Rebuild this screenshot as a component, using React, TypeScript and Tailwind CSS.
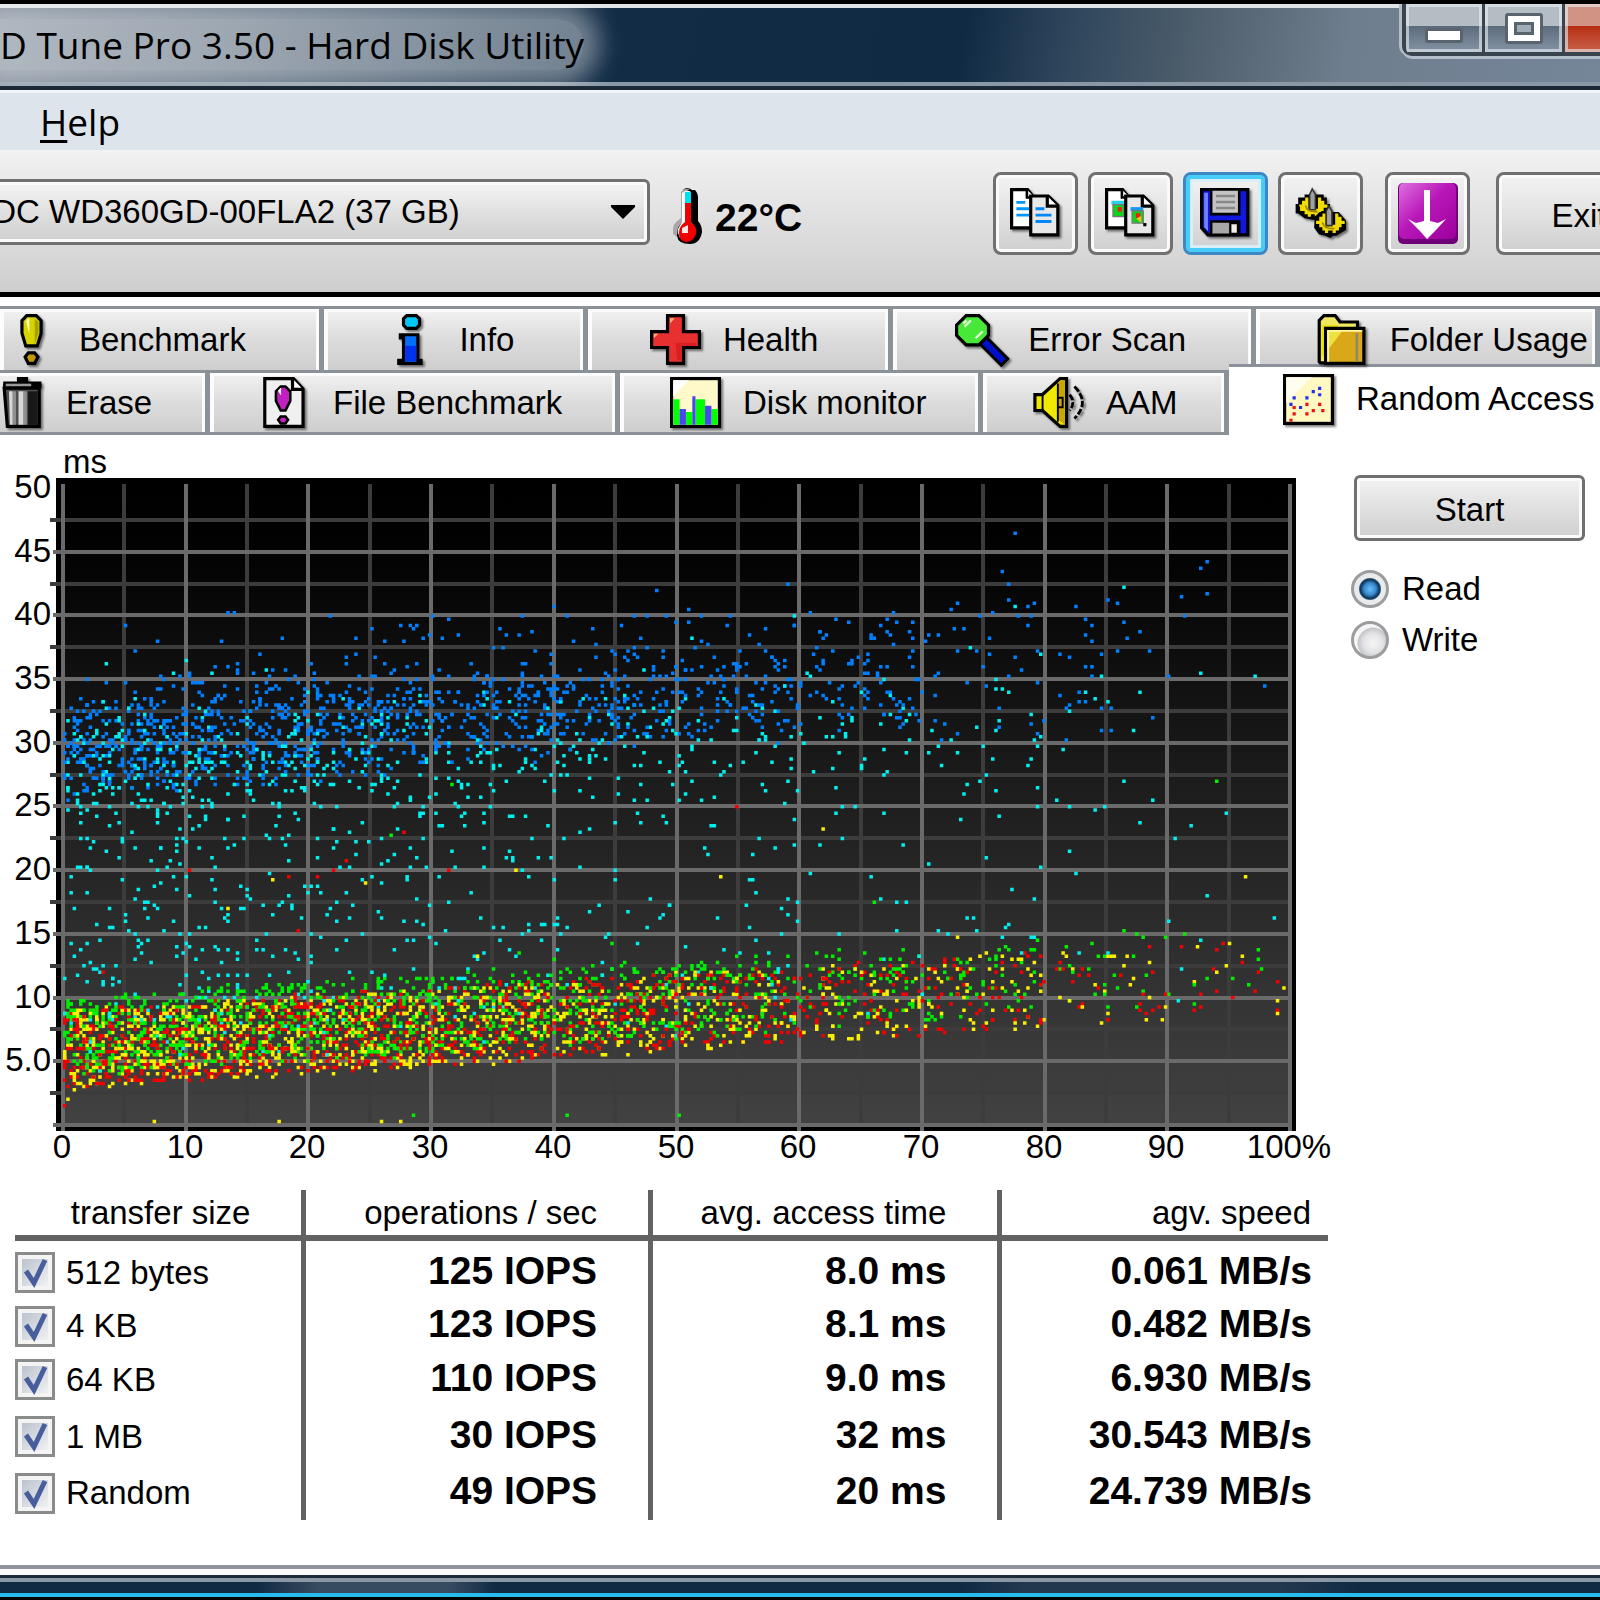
import React, { type ReactNode } from "react";

/* ---------- Icons (16-unit grid) ---------- */

function Icon({ children }: { children: ReactNode }) {
  return (
    <svg
      viewBox="0 0 16 16"
      aria-hidden="true"
      className="h-[51px] w-[51px] shrink-0 overflow-visible drop-shadow-[2px_2px_1px_rgba(0,0,0,0.5)]"
    >
      {children}
    </svg>
  );
}

const BenchmarkIcon = () => (
  <Icon>
    <path d="M6.5 .5h3l1.5 1.6v4L9.800 10H6.200L5 6V2.100z" fill="#d8d400" stroke="#000" />
    <path d="M6.300 2.200l1-1v5z" fill="#fffccc" />
    <path d="M9 1.500v8l1.200-3.500V2.500z" fill="#a8a000" />
    <path d="M7 12.200h2l1 1.300-1 2H7l-1-2z" fill="#c89800" stroke="#000" />
  </Icon>
);

const InfoIcon = () => (
  <Icon>
    <path d="M6.500 .5h3l1 1v2l-1 1h-3l-1-1v-2z" fill="#00c8f8" stroke="#000" />
    <path d="M4.500 6.500h5.500v8h1v1H4v-1h1.500v-7h-1z" fill="#0070f8" stroke="#000" />
    <path d="M6 10h3.500v4.800H6z" fill="#0030f0" />
  </Icon>
);

const HealthIcon = () => (
  <Icon>
    <path d="M5.500 .5h5v5h5v5h-5v5h-5v-5h-5v-5h5z" fill="#e83030" stroke="#000" />
    <path d="M6.300 3V1.300h1.500zM1.200 7.500V6.200h1.500z" fill="#f8b070" />
    <path d="M8 9h6.500v1H10v4.500H8.500z" fill="#d82020" />
  </Icon>
);

const SearchIcon = () => (
  <Icon>
    <path d="M9 8.500l5.500 5.500" stroke="#000" strokeWidth="3.800" strokeLinecap="square" />
    <path d="M8.800 8.300l5.700 5.700" stroke="#0010c8" strokeWidth="2" strokeLinecap="square" />
    <path d="M3.500 .5h4l3 3v3.200l-3 3h-4l-3-3V3.500z" fill="#48e838" stroke="#000" />
    <path d="M3 4l2-2M6.500 7.600l2.200-2.200M2.600 3l1-1" stroke="#e8ffd8" strokeWidth=".7" />
  </Icon>
);

const FolderIcon = () => (
  <Icon>
    <path d="M.7 15V2L2.200 .5h3.500l1.500 2h5.500V6L6 15.300H1z" fill="#f0e860" stroke="#000" />
    <path d="M1.500 3.500h5v2h-3.500v8.500l-1.500-1z" fill="#e8e000" />
    <path d="M2.700 4.500h12v11h-12z" fill="#d8a818" stroke="#000" />
    <path d="M3.200 5h5l-5 6.500z" fill="#f0e040" />
    <path d="M3.500 5v10M3.200 5.300h11" stroke="#fff8a0" strokeWidth=".6" />
    <path d="M12.500 6v9" stroke="#90866a" strokeWidth=".8" />
  </Icon>
);

const EraseIcon = () => (
  <Icon>
    <path d="M3.500 3.500h11V15.500h-10z" fill="#505050" stroke="#000" />
    <path d="M5 4.500h1.200V15H5.300zM8 4.500h1.600V15H8z" fill="#d8d8d8" />
    <path d="M6.200 4.500h1V15h-1zM9.600 4.500h1V15h-1z" fill="#909090" />
    <path d="M11 4.500h3V15h-3z" fill="#181818" />
    <path d="M7.500 .8h3.500M3.200 2.200h12" stroke="#000" strokeWidth="1.600" />
    <path d="M3.200 2.900h12" stroke="#000" strokeWidth="1.600" />
    <path d="M4 2.500h8" stroke="#999" strokeWidth=".8" />
  </Icon>
);

const FileBenchmarkIcon = () => (
  <Icon>
    <path d="M1.500 .5h9l3 3.200v11.800h-12z" fill="#f0f0f0" stroke="#000" />
    <path d="M10.200 .5v3.400h3.300" fill="#fff" stroke="#000" />
    <path d="M6.500 3h1.500l1.500 1.500v3L8 10.500H6.500L5 7.500v-3z" fill="#c020c0" stroke="#000" strokeWidth=".8" />
    <path d="M5.600 4.300l1-1v2.500z" fill="#fff" />
    <path d="M6.500 12.400H8l.8 1-.8 1.200H6.500l-.8-1.200z" fill="#c020c0" stroke="#000" strokeWidth=".8" />
  </Icon>
);

const DiskMonitorIcon = () => (
  <Icon>
    <rect x=".5" y=".5" width="15" height="15" fill="#fff8c8" stroke="#000" />
    <path d="M1 1h5L1 6z" fill="#fff" />
    <path d="M1 7h2v8H1zM5 11h2v4H5zM8 7h3v8H8zM13 10h2v5h-2z" fill="#0f0" />
    <path d="M3 10h2v5H3zM7 6h1v9H7zM11 9h2v6h-2z" fill="#4848f0" />
  </Icon>
);

const SpeakerIcon = () => (
  <Icon>
    <path d="M3 5.500L8.500 .5h2v15h-2L3 10.500H.6v-5z" fill="#f0e800" stroke="#000" />
    <path d="M8 1.500l2-.5v14l-2-1.500z" fill="#c8a800" />
    <path d="M3 5.500v5M7.800 2v12M7.800 6.500h1.500v3H7.800" stroke="#000" strokeWidth=".6" fill="none" />
    <path d="M11.500 5.500q2 2.500 0 5M13 3q5 5 0 10" stroke="#000" strokeWidth=".9" strokeDasharray="2 .6" fill="none" />
  </Icon>
);

const RandomAccessIcon = () => (
  <Icon>
    <rect x=".5" y=".5" width="15" height="15" fill="#fff8c0" stroke="#000" />
    <path d="M1 1h8L1 9z" fill="#fffdf0" />
    <path d="M2 9h1v1H2zM3 7h1v1H3zM5 10h1v1H5zM7 7h1v1H7zM9 5h1v1H9zM11 4h1v1h-1zM11 6h1v1h-1z" fill="#2030f0" />
    <path d="M3 10h1v1H3zM3 12h1v1H3zM2 14h1v1H2zM7 9h1v1H7zM7 12h1v1H7zM9 11h1v1H9zM11 9h1v1h-1zM12 11h1v1h-1z" fill="#f01010" />
  </Icon>
);

const Pages = () => (
  <>
    <path d="M.5 .5h5l2 2.500v9.500h-7z" fill="#fff" stroke="#000" />
    <path d="M5.300 .5v2.500h2.500" fill="#fff" stroke="#000" strokeWidth=".8" />
  </>
);
const FrontPage = () => (
  <>
    <path d="M6.500 2.500h5.500l3 3v9.200H6.500z" fill="#e8e8e8" stroke="#000" />
    <path d="M11.700 2.500v3.200H15" fill="#fff" stroke="#000" />
  </>
);

const CopyTextIcon = () => (
  <Icon>
    <Pages />
    <path d="M2 4.500h2.800M2 6.500h4M2 8.500h4" stroke="#0098f8" strokeWidth=".9" />
    <FrontPage />
    <path d="M8 6.500h2.800M8 8.500h5M8 10.500h5" stroke="#0088f8" strokeWidth=".9" />
  </Icon>
);

const CopyImageIcon = () => (
  <Icon>
    <Pages />
    <path d="M2 4h4v1.200H2z" fill="#28d0f0" />
    <path d="M2.500 5.200H6V9H2.500z" fill="#10d020" stroke="#777" strokeWidth=".4" />
    <path d="M4 6h1.300v1.400H4z" fill="#f02010" />
    <FrontPage />
    <path d="M8 6h4v1.200H8z" fill="#1898f0" />
    <path d="M8.500 7.200H12V11H8.500z" fill="#10d020" stroke="#777" strokeWidth=".4" />
    <path d="M9.700 7.900h1.400v1.500H9.700z" fill="#f02010" />
    <path d="M9.800 9.600l1.600-.8v2.200z" fill="#f0c020" />
    <path d="M12 11h1v1h-1z" fill="#000" />
  </Icon>
);

const SaveIcon = () => (
  <Icon>
    <path d="M.5 .5h14.500v14.200H2.500L.5 12.500z" fill="#1018e0" stroke="#000" />
    <path d="M1.300 1.500h1.200v12l-1.200-1.200z" fill="#7080ff" />
    <path d="M3.500 .5h8.800v7.700H3.500z" fill="#c4c4c4" stroke="#000" strokeWidth=".8" />
    <path d="M5 2.500h6M5 4.400h6M5 6.300h6" stroke="#888" strokeWidth=".8" />
    <path d="M3.500 10.500h8.800v4.200H3.500z" fill="#a8a8a8" stroke="#000" strokeWidth=".8" />
    <path d="M9.500 11h2.400v3.400H9.500z" fill="#f0f0e8" stroke="#000" strokeWidth=".7" />
  </Icon>
);

const GearsIcon = () => (
  <Icon>
    <path d="M1 3h2V2h6v1h1v2h1v3l-2 2H6L3 9.500 1 8H.2V5H1z" fill="#000" />
    <path d="M1.200 5.200h1V4h1V3h1v3.500h3V3h1v1h1v1.200h1v1H9v1h-.800v1H7.200V9H6.200V8.200H5V9H4V8.200H3v-1H1.600v-1z" fill="#f0dc00" />
    <path d="M4.600 6.800V2L5.400 .3 6.400 2v4.800z" fill="#a0a0a0" stroke="#333" strokeWidth=".5" />
    <path d="M3.300 5.500q.5 2.200 3.800 1.900" fill="none" stroke="#a08400" strokeWidth=".5" />
    <path d="M6.200 9l1.500-1.500h6L15 9l1 1.200v3L14.500 14l-1.500 1h-1l-1 .700-1.500-.700L7.500 14.500 6 12.500z" fill="#000" />
    <path d="M6.600 10.300h1V9h1V8h1v3.500h3V8h1v1h1v1.300h1v1h-1v1h-.800v1h-1v.8h-1v-.8h-1.400v.8h-1v-.8h-.8v-1H7.600v-1h-1z" fill="#f0dc00" />
    <path d="M9.800 11.800V7.200l.8-1.500 1 1.500v4.600z" fill="#a0a0a0" stroke="#333" strokeWidth=".5" />
    <path d="M8.600 10.800q.5 2.200 3.800 1.900" fill="none" stroke="#a08400" strokeWidth=".5" />
  </Icon>
);

const DownloadIcon = () => (
  <svg viewBox="0 0 60 61" aria-hidden="true" className="h-[61px] w-[60px]">
    <defs>
      <linearGradient id="purple" x1="0" y1="0" x2="1" y2="1">
        <stop offset="0" stopColor="#e070e0" />
        <stop offset=".45" stopColor="#b818b8" />
        <stop offset="1" stopColor="#9c009c" />
      </linearGradient>
    </defs>
    <rect width="60" height="61" rx="5" fill="#700078" />
    <rect x="1" width="57" height="56" rx="5" fill="url(#purple)" />
    <path d="M26 7h6v31h-6z" fill="#fff" />
    <path d="M10 36l8 4 8-2h6l8 2 8-4-10 11-9 9-8-9z" fill="#fff" />
  </svg>
);

const Thermometer = () => (
  <svg viewBox="0 0 30 58" aria-hidden="true" className="h-[58px] w-[30px]">
    <path d="M10 3q4-4 9 0h3q3 3 3 8v23q4 4 4 11-2 12-12 12-12 0-13-8L5 37l4-5z" fill="#000" />
    <path d="M8 5q3-4 9-3L10 6v28l-6 8v8l-4-3q-1-8 3-12l5-4z" fill="#a8a8a8" />
    <path d="M9 6q5-4 9-1v30q5 5 4 12-3 7-9 6-9-1-8-11l4-7z" fill="#fff" />
    <path d="M12 5h6v11h-6z" fill="#00e0f0" />
    <path d="M12 16h6v19q7 6 5 12-3 8-10 8-7-1-7-9 0-7 6-11z" fill="#f00000" />
    <path d="M9 41l6-3v8h-6z" fill="#ffe8e8" />
  </svg>
);

/* ---------- Scatter data ---------- */

type Series = "red" | "yellow" | "green" | "cyan" | "blue";
const COLORS: Record<Series, string> = {
  red: "#f40000",
  yellow: "#f8f000",
  green: "#00f000",
  cyan: "#00f0f0",
  blue: "#0080ff",
};

const PLOT = { left: 64, top: 48, width: 1227, height: 637 };

function randomSource(seed: number) {
  let s = seed;
  return () => {
    s = (s * 1664525 + 1013904223) >>> 0;
    return s / 4294967296;
  };
}

const BAND = [235, 215, 200, 165, 135, 100, 68, 52, 22, 6];
const CYAN = [245, 205, 155, 125, 100, 85, 50, 8, 0, 0];
const BLUE = [260, 230, 200, 165, 140, 115, 80, 0, 0, 0];

const seekTime = (x: number) => 2.600 + 0.058 * x;

function buildPoints() {
  const rnd = randomSource(350);
  const pts: [Series, number, number][] = [];
  const spread = (name: Series, counts: number[], transfer: (x: number) => number) => {
    counts.forEach((n, decade) => {
      for (let i = 0; i < n; i++) {
        const x = Math.min((decade + rnd()) * 10, 99);
        pts.push([name, x, seekTime(x) + rnd() * 6 + (rnd() + rnd()) * 0.300 + transfer(x)]);
      }
    });
  };
  spread("blue", BLUE, (x) => 22.400 + rnd() * rnd() * 6.500 + x * 0.020);
  spread("cyan", CYAN, () => (rnd() < 0.300 ? 19 + rnd() * 6 : rnd() * 24));
  spread("green", BAND, () => 1.100);
  spread("red", BAND, () => 0.100);
  spread("yellow", BAND, () => 0);
  for (let i = pts.length - 1; i > 0; i--) {
    const j = Math.floor(rnd() * (i + 1));
    [pts[i], pts[j]] = [pts[j], pts[i]];
  }
  return pts;
}

/* Sparse samples: [percent of disk, access time in ms] */
const SPARSE: Record<Series, number[][]> = {
  red: [[10.100, 20], [23, 20.700], [22, 20], [20.700, 19.500], [18.300, 19.500], [27.700, 23], [31.300, 20], [19.100, 15.200], [3.100, 12], [0, 1.500], [54.700, 25], [94.400, 14.200], [96, 12.700], [94.100, 13.700], [97, 10.500], [93.900, 10.500], [95.200, 10], [92.100, 9], [92.700, 10.200]],
  yellow: [[13.200, 17], [17.100, 19.200], [24.600, 19], [36.800, 20], [0.200, 2], [33.700, 13.300], [62, 23.200], [53.400, 19.500], [96.400, 19.500], [99.600, 10.800], [95.100, 14.200], [94.900, 12.500], [72.800, 14.700], [7.200, 0.200], [17.400, 0.200], [25.900, 0.200], [27.500, 0.200]],
  green: [[26.600, 22.800], [37, 13.500], [44.600, 14.300], [40, 13], [31.600, 26.800], [94.100, 27], [66.100, 17.500], [50, 0.700], [28.500, 0.700], [41, 0.700], [91.500, 15], [86.300, 15.200], [89.900, 14.800], [93.200, 11.500], [96.600, 11]],
  blue: [
    [77.600, 46.500], [76.500, 43.500], [77, 42.500], [93.300, 44.200], [92.800, 43.700], [93.100, 41.700], [91.200, 41.500], [91.500, 40], [59.100, 42.500], [48.400, 42], [13.300, 40.200], [13.800, 40.200], [4.900, 39.200], [7.500, 38], [5.700, 37.200], [12.900, 38], [21.800, 40], [39.900, 40.700], [37.400, 40], [30.100, 40], [31.400, 39.700],
    [27.500, 39.200], [28.200, 39.200], [28.600, 39.200], [25, 39], [26, 38], [23.700, 38.200], [35.600, 39], [36.100, 38.500], [37.200, 38.500], [38.200, 38.700], [32.200, 38.500], [41, 40], [46.500, 40], [47.600, 40], [45.500, 39.200], [49.200, 40], [52, 40], [54.200, 40], [51, 39.500], [56, 38.500], [57.100, 39], [59.600, 39.200], [61.500, 38.700], [63, 39.800], [64, 39.500], [67, 39.800], [67.700, 40.200], [66.600, 39.200], [69.200, 39.500],
    [70.200, 38], [70.500, 38.500], [71.300, 38.500], [72.300, 40.500], [72.800, 41], [72.600, 39], [73.300, 39], [72.800, 37.200], [74.300, 37.300], [74.600, 40], [75.600, 40.200], [75.400, 38.300], [75.400, 37], [74.900, 36], [77, 41.200], [77, 35.200], [77.800, 40], [78.800, 40], [79, 41], [78.500, 40.700], [78.500, 39.200], [77.500, 36.700], [78, 35.700], [79.300, 37.300], [79.500, 34.800],
    [82.400, 40.700], [83.200, 39.800], [83.400, 39.800], [83.900, 39.200], [83.400, 38.500], [83.900, 38], [85, 41.200], [85.800, 41], [86.500, 39.500], [86.800, 38.200], [87.600, 38.700], [86, 37.300], [88.400, 37.300], [81.100, 37], [81.900, 36.700], [84.500, 37], [83.200, 36], [83.700, 36], [83.700, 35.200], [81.100, 33.700], [81.900, 33], [82.700, 34], [83.200, 33.200], [82.700, 33.200], [81.600, 32.700], [84.500, 32.700], [85.500, 32.700], [88.700, 32], [84.500, 31], [85.500, 31], [79.800, 31.700], [81.600, 30.200],
    [76.200, 32.700], [76.200, 31.200], [78.800, 31.500], [79.300, 30.700], [71, 35.200], [71.300, 35.500], [73.600, 34.800], [75.100, 34.500], [71, 33.700], [71, 31.700], [71.800, 31.500], [72.800, 30.700], [71.500, 30.200], [90, 35.200], [98, 34.500],
  ],
  cyan: [
    [3.500, 36.200], [10, 36.500], [9, 35.500], [12, 35.500], [16.500, 35.700], [59.600, 40], [51.300, 38.200],
    [77.600, 40.700], [73.800, 37.500], [79.600, 37], [76, 35], [76, 34.200], [77, 34], [83.200, 34], [84.200, 33.500], [76.200, 31.700], [70.700, 31], [72.300, 30.200], [71.300, 29.700], [70.500, 29.200], [72.800, 29.200], [71.500, 28.200], [74.900, 29.700], [79, 30.200], [79.600, 30.500], [78.800, 28.700], [78.500, 28.200], [75.100, 27.500], [74.600, 27], [73.600, 26.700], [73.300, 26], [76, 26.200], [79.300, 26.500], [79.300, 25], [73.100, 24], [70.500, 20.500], [73.600, 16.200], [74.100, 16.200], [74.300, 15.200], [71.300, 15.200], [72.100, 15], [77, 15.700], [76.800, 15.500], [78.800, 14.700], [79.100, 14.700], [78, 13.500], [76.500, 14.700], [86.300, 42.200], [92.700, 35.500], [97, 35.200], [98.600, 16.200], [93.300, 18], [90, 16], [90.700, 22.500], [92, 23.500], [87.600, 23.700], [94.900, 24.500], [88.900, 25.500], [82.100, 21.500], [82.400, 19.700], [79.600, 20.200], [77.300, 18.500], [79.100, 17.700], [80.900, 25.500], [81.900, 25], [84.200, 24.800], [84.800, 25], [86.300, 27], [87.600, 34], [87.100, 31], [81.900, 32.500], [81.400, 29.500], [84.500, 35.200], [85, 33.200], [92.700, 14.500], [91.100, 12.200], [90.800, 9.700], [85, 13.500], [82.700, 13.500],
  ],
};

const dot = ([x, y]: number[]) => {
  const px = PLOT.left + Math.round((x / 100) * 383) * 3.200 - 1;
  const py = PLOT.top + PLOT.height - Math.round(y * 4) * 3.180 - 2;
  return `M${px.toFixed(1)} ${py.toFixed(1)}h3.500v3.500h-3.500z`;
};

const LAYERS = (() => {
  const pts = buildPoints();
  const size = Math.ceil(pts.length / 10);
  const out: { color: string; d: string }[] = [];
  for (let i = 0; i < pts.length; i += size) {
    const part = pts.slice(i, i + size);
    (Object.keys(COLORS) as Series[]).forEach((name) => {
      const d = part.filter((p) => p[0] === name).map((p) => dot([p[1], p[2]])).join("");
      if (d) out.push({ color: COLORS[name], d });
    });
  }
  (Object.keys(COLORS) as Series[]).forEach((name) => {
    out.push({ color: COLORS[name], d: SPARSE[name].map(dot).join("") });
  });
  return out;
})();

function AccessChart() {
  const { left, top, width, height } = PLOT;
  const bottom = top + height;
  const xs = Array.from({ length: 21 }, (_, i) => i);
  const ys = Array.from({ length: 20 }, (_, i) => i);
  const xAt = (i: number) => left - 1 + Math.round((i * width) / 20);
  const yAt = (i: number) => bottom - Math.round((i * height) / 20);
  return (
    <svg viewBox="0 0 1340 730" role="img" aria-label="Access time by disk position" className="block w-full font-['Liberation_Sans',sans-serif] text-[33px]">
      <defs>
        <linearGradient id="plot" x1="0" y1="0" x2="0" y2="1">
          <stop offset="0" stopColor="#000" />
          <stop offset=".1" stopColor="#020202" />
          <stop offset="1" stopColor="#424242" />
        </linearGradient>
      </defs>
      <rect x="56" y="38" width="1240" height="653" fill="#000" />
      <rect x={left} y="44" width={width} height={bottom - 44} fill="url(#plot)" />
      <g fill="#3c3c3c">
        {xs.filter((i) => i % 2 === 1).map((i) => (
          <rect key={i} x={xAt(i) - 2} y="44" width="4" height={bottom - 44} />
        ))}
        {ys.filter((i) => i % 2 === 1).map((i) => (
          <rect key={i} x="50" y={yAt(i) - 2} width={1241} height="4" />
        ))}
      </g>
      <g fill="#6a6a6a">
        {xs.filter((i) => i % 2 === 0).map((i) => (
          <rect key={i} x={xAt(i) - 2} y="44" width="4" height={bottom - 38} />
        ))}
        {ys.filter((i) => i % 2 === 0).map((i) => (
          <rect key={i} x="53" y={yAt(i) - 2} width={1238} height="4" />
        ))}
      </g>
      {LAYERS.map((l, i) => (
        <path key={i} d={l.d} fill={l.color} />
      ))}
      <text x="63" y="33">ms</text>
      <g textAnchor="end">
        {["5.0", "10", "15", "20", "25", "30", "35", "40", "45", "50"].map((t, i) => (
          <text key={t} x="51" y={yAt((i + 1) * 2) + 10}>{t}</text>
        ))}
      </g>
      <g textAnchor="middle">
        {["0", "10", "20", "30", "40", "50", "60", "70", "80", "90", "100%"].map((t, i) => (
          <text key={t} x={xAt(i * 2) - 1} y="718">{t}</text>
        ))}
      </g>
    </svg>
  );
}

/* ---------- Tabs ---------- */

function Tab({ icon, label, pad }: { icon: ReactNode; label: string; pad: string }) {
  return (
    <button
      type="button"
      role="tab"
      aria-selected="false"
      className={`flex h-full min-w-0 items-center gap-[22px] overflow-hidden border-t-[3px] border-r-[5px] border-[#8b9199] bg-gradient-to-b from-[#f2f2f2] from-0% via-[#dcdcdc] via-50% to-[#cecece] whitespace-nowrap shadow-[inset_4px_3px_0_#fcfcfc,inset_-3px_0_0_#fcfcfc] ${pad}`}
    >
      {icon}
      <span>{label}</span>
    </button>
  );
}

/* ---------- Toolbar buttons ---------- */

function ToolButton({ label, active, className = "", children }: { label: string; active?: boolean; className?: string; children: ReactNode }) {
  return (
    <button
      type="button"
      aria-label={label}
      className={`grid h-[83px] w-[85px] shrink-0 place-items-center rounded-[8px] border-[3px] bg-gradient-to-b from-[#f3f3f3] via-[#e2e2e2] via-50% to-[#cfcfcf] ${
        active
          ? "border-[#3c88c4] shadow-[inset_0_0_0_4px_#48ccf8,inset_0_0_0_7px_#d8eef8]"
          : "border-[#707070] shadow-[inset_0_0_0_3px_#fafafa]"
      } ${className}`}
    >
      {children}
    </button>
  );
}

/* ---------- Results ---------- */

const ROWS = [
  { size: "512 bytes", ops: "125 IOPS", time: "8.0 ms", speed: "0.061 MB/s", h: "h-[59px]" },
  { size: "4 KB", ops: "123 IOPS", time: "8.1 ms", speed: "0.482 MB/s", h: "h-[48px]" },
  { size: "64 KB", ops: "110 IOPS", time: "9.0 ms", speed: "6.930 MB/s", h: "h-[59px]" },
  { size: "1 MB", ops: "30 IOPS", time: "32 ms", speed: "30.543 MB/s", h: "h-[55px]" },
  { size: "Random", ops: "49 IOPS", time: "20 ms", speed: "24.739 MB/s", h: "h-[58px]" },
];

function SizeCheck({ label }: { label: string }) {
  return (
    <label className="flex items-center gap-[11px] pt-1">
      <span className="grid">
        <input
          type="checkbox"
          defaultChecked
          className="peer col-start-1 row-start-1 h-[41px] w-[40px] appearance-none border-[3px] border-[#8a8c8c] bg-gradient-to-br from-[#b4bcc8] to-[#f8f8f8] shadow-[inset_0_0_0_4px_#f4f4f4]"
        />
        <svg viewBox="0 0 40 41" aria-hidden="true" className="pointer-events-none invisible col-start-1 row-start-1 h-[41px] w-[40px] peer-checked:visible">
          <path d="M11 19l8 12L30 8" fill="none" stroke="#485e9c" strokeWidth="5" />
        </svg>
      </span>
      <span>{label}</span>
    </label>
  );
}

function Results() {
  const head = "border-r-[5px] border-[#626262] pr-[51px] text-right font-normal";
  const cell = "border-r-[5px] border-[#626262] pr-[51px] text-right";
  return (
    <table className="ml-[15px] w-[calc(100%-27px)] table-fixed border-separate border-spacing-0 leading-[36px] whitespace-nowrap">
      <colgroup>
        <col className="w-[22.2%]" />
        <col className="w-[26.4%]" />
        <col className="w-[26.6%]" />
        <col />
      </colgroup>
      <thead>
        <tr className="h-[51px]">
          {["transfer size", "operations / sec", "avg. access time"].map((t) => (
            <th key={t} scope="col" className={`${head} border-b-[6px] align-middle`}>{t}</th>
          ))}
          <th scope="col" className="border-b-[6px] border-[#626262] pr-[17px] text-right font-normal">agv. speed</th>
        </tr>
      </thead>
      <tbody className="text-[39px] font-bold">
        {ROWS.map((r) => (
          <tr key={r.size} className={r.h}>
            <td className="border-r-[5px] border-[#626262] text-[33px] font-normal">
              <SizeCheck label={r.size} />
            </td>
            <td className={cell}>{r.ops}</td>
            <td className={cell}>{r.time}</td>
            <td className="pr-[16px] text-right">{r.speed}</td>
          </tr>
        ))}
      </tbody>
    </table>
  );
}

function RadioOption({ label, checked }: { label: string; checked?: boolean }) {
  return (
    <label className="flex h-[51px] items-center gap-[13px]">
      <input
        type="radio"
        name="mode"
        defaultChecked={checked}
        className="h-[38px] w-[38px] appearance-none rounded-full border-[3px] border-[#9a9c9e] bg-[radial-gradient(circle_at_60%_60%,#f4f4f4_0,#e4e4e6_35%,#c4c6ca_55%,#f6f6f6_60%)] checked:bg-[radial-gradient(circle_closest-side,#68c0f8_0,#3888cc_38%,#10385c_58%,#143c60_64%,#e8eaec_72%)]"
      />
      <span>{label}</span>
    </label>
  );
}

export default function App() {
  const caption = "flex h-[52px] shrink-0 items-center justify-center border-r-[3px] border-b-[4px] border-[#3a444e] shadow-[inset_0_0_0_3px_rgba(235,240,245,0.6)]";
  return (
    <div className="flex min-h-screen w-full flex-col overflow-hidden bg-white font-['Liberation_Sans',Arial,sans-serif] text-[33px] text-black">
      {/* Title bar */}
      <header className="flex h-[90px] items-start overflow-hidden border-t-[4px] border-b-[4px] border-t-black border-b-[#1c2a38] bg-[linear-gradient(100deg,#7c8896_0%,#5c6c7e_15%,#122c46_38%,#102a44_60%,#2c445a_66%,#50606e_75%,#6e7e8e_84%,#76869a_100%)] shadow-[inset_0_4px_0_#dfe3e6,inset_0_-4px_0_#8a98a6]">
        <h1 className="mt-[14px] h-[50px] pr-4 font-['Open_Sans','Noto_Sans',sans-serif] text-[37px] leading-[54px] whitespace-nowrap">
          <span className="rounded-r-[30px] bg-white/40 shadow-[0_0_24px_16px_rgba(255,255,255,0.4)]">D Tune Pro 3.50 - Hard Disk Utility</span>
        </h1>
        <div className="-mr-[45px] ml-auto flex shrink-0 overflow-hidden rounded-bl-[10px] border-l-[4px] border-[#3a444e] shadow-[0_3px_0_#b4bec8,-3px_0_0_#b4bec8]">
          <button type="button" aria-label="Minimize" className={`${caption} w-[79px] bg-gradient-to-b from-[#b4bcc4] from-45% via-[#5c6c7c] via-46% to-[#8494a4]`}>
            <span className="mt-[14px] h-[15px] w-[38px] rounded-[3px] border-[3px] border-[#5a646e] bg-white" />
          </button>
          <button type="button" aria-label="Maximize" className={`${caption} w-[80px] bg-gradient-to-b from-[#b4bcc4] from-45% via-[#5c6c7c] via-46% to-[#8494a4]`}>
            <span className="grid h-[31px] w-[38px] place-items-center rounded-[3px] border-[3px] border-[#5a646e] bg-white">
              <span className="h-[13px] w-[20px] border-[3px] border-[#5a646e] bg-[#a0acb8]" />
            </span>
          </button>
          <button type="button" aria-label="Close" className={`${caption} w-[80px] bg-gradient-to-b from-[#cf9484] from-45% via-[#b82c10] via-46% to-[#c86048]`} />
        </div>
      </header>

      {/* Menu bar */}
      <nav className="flex h-[60px] items-center border-t-[3px] border-[#f2f6fa] bg-[#dde4ec] pl-[40px] font-['Open_Sans','Noto_Sans',sans-serif] text-[37px] leading-none">
        <button type="button"><span className="underline decoration-3 underline-offset-4">H</span>elp</button>
      </nav>

      {/* Toolbar */}
      <div className="flex h-[147px] items-start overflow-hidden border-b-[5px] border-black bg-gradient-to-b from-[#f2f2f2] to-[#cecece] pt-[22px]">
        <div className="-ml-[60px] mt-[7px] grid w-[710px] shrink-0">
          <select
            aria-label="Drive"
            className="col-start-1 row-start-1 h-[66px] appearance-none rounded-[6px] border-[3px] border-[#707070] bg-gradient-to-b from-[#f2f2f2] from-10% via-[#e0e0e0] via-50% to-[#cfcfcf] pl-[18px] text-[33px] shadow-[inset_0_0_0_3px_#fafafa]"
          >
            <option>WDC WD360GD-00FLA2 (37 GB)</option>
          </select>
          <svg viewBox="0 0 24 14" aria-hidden="true" className="pointer-events-none col-start-1 row-start-1 mr-[15px] h-[14px] w-[24px] self-center justify-self-end">
            <path d="M0 0h24v2L12 14 0 2z" />
          </svg>
        </div>
        <div className="mt-[13px] ml-[23px] flex items-center gap-[12px] text-[39px] font-bold">
          <Thermometer />
          <span className="pt-1">22°C</span>
        </div>
        <div className="-mr-[62px] ml-auto flex shrink-0 gap-[10px]">
          <ToolButton label="Copy information"><CopyTextIcon /></ToolButton>
          <ToolButton label="Copy screenshot"><CopyImageIcon /></ToolButton>
          <ToolButton label="Save screenshot" active><SaveIcon /></ToolButton>
          <ToolButton label="Options"><GearsIcon /></ToolButton>
          <ToolButton label="Minimize to tray" className="ml-[12px]"><DownloadIcon /></ToolButton>
          <button type="button" className="ml-[16px] h-[83px] w-[166px] shrink-0 rounded-[8px] border-[3px] border-[#707070] bg-gradient-to-b from-[#f3f3f3] via-[#e2e2e2] via-50% to-[#cfcfcf] pt-1 shadow-[inset_0_0_0_3px_#fafafa]">
            Exit
          </button>
        </div>
      </div>

      {/* Tabs */}
      <div role="tablist" className="mt-[9px]">
        <div className="grid h-[64px] grid-cols-[325fr_264fr_306fr_363fr_345fr]">
          <Tab pad="pl-[6px]" icon={<BenchmarkIcon />} label="Benchmark" />
          <Tab pad="pl-[62px]" icon={<InfoIcon />} label="Info" />
          <Tab pad="pl-[62px]" icon={<HealthIcon />} label="Health" />
          <Tab pad="pl-[62px]" icon={<SearchIcon />} label="Error Scan" />
          <Tab pad="pl-[61px]" icon={<FolderIcon />} label="Folder Usage" />
        </div>
        <div className="grid h-[65px] grid-cols-[210fr_410fr_363fr_246fr_371fr]">
          <div className="flex overflow-hidden border-b-[3px] border-[#8b9199]">
            <div className="-ml-[7px] flex-1"><Tab pad="w-full pl-0" icon={<EraseIcon />} label="Erase" /></div>
          </div>
          <div className="grid border-b-[3px] border-[#8b9199]"><Tab pad="pl-[50px]" icon={<FileBenchmarkIcon />} label="File Benchmark" /></div>
          <div className="grid border-b-[3px] border-[#8b9199]"><Tab pad="pl-[50px]" icon={<DiskMonitorIcon />} label="Disk monitor" /></div>
          <div className="grid border-b-[3px] border-[#8b9199]"><Tab pad="pl-[50px]" icon={<SpeakerIcon />} label="AAM" /></div>
          <button type="button" role="tab" aria-selected="true" className="-mt-[6px] flex items-center gap-[22px] overflow-hidden border-t-[3px] border-[#8b9199] bg-white pb-[4px] pl-[54px] whitespace-nowrap">
            <RandomAccessIcon />
            <span>Random Access</span>
          </button>
        </div>
      </div>

      {/* Test panel */}
      <main className="grid flex-1 grid-cols-[1340fr_260fr] pt-[5px]">
        <section className="min-w-0">
          <AccessChart />
          <div className="mt-[20px]"><Results /></div>
        </section>
        <aside className="flex flex-col pt-[35px] pr-[15px] pl-[11px]">
          <button type="button" className="ml-[3px] h-[66px] rounded-[6px] border-[3px] border-[#707070] bg-gradient-to-b from-[#f2f2f2] via-[#e0e0e0] via-50% to-[#cfcfcf] pt-1 shadow-[inset_0_0_0_3px_#fafafa]">
            Start
          </button>
          <fieldset aria-label="Test mode" className="mt-[22px]">
            <RadioOption label="Read" checked />
            <RadioOption label="Write" />
          </fieldset>
        </aside>
      </main>

      {/* Window frame */}
      <footer>
        <div className="h-[10px] border-t-[4px] border-[#8f959c] bg-[#fafafa]" />
        <div className="h-[25px] border-t-[3px] border-b-[3px] border-t-[#1c2a38] border-b-black bg-[linear-gradient(90deg,#102a44_16%,#384c60_20%,#384c60_28%,#102a44_31%,#102a44_60%,#22384e_64%,#22384e_80%,#102a44_85%)] shadow-[inset_0_4px_0_#8a98a6,inset_0_-4px_0_#28bcec]" />
      </footer>
    </div>
  );
}
